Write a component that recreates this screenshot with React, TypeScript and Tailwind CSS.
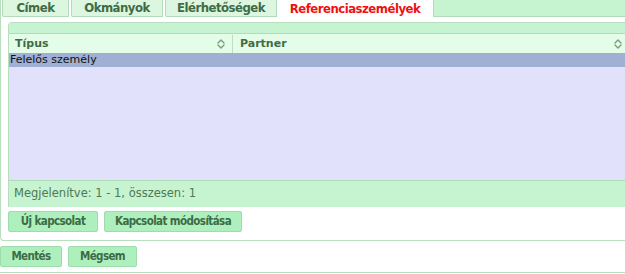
import React from "react";

const tabs = ["Címek", "Okmányok", "Elérhetőségek"];

function SortIcon() {
  return (
    <svg viewBox="0 0 10 12" className="h-[12px] w-[10px]" fill="none" stroke="#7a9a7e" strokeWidth={1.4}>
      <path d="M2 5l3-3 3 3M2 7l3 3 3-3" strokeLinecap="round" strokeLinejoin="round" />
    </svg>
  );
}

function Btn({ label, w }: { label: string; w: string }) {
  return (
    <button
      className={`${w} h-[21px] rounded-[2px] border border-[#9fdcac] bg-[#aef0bd] text-[11.5px] font-bold tracking-[-0.6px] text-[#3d6b45] [font-family:'DejaVu_Sans_Condensed','DejaVu_Sans',sans-serif]`}
    >
      {label}
    </button>
  );
}

export default function App() {
  return (
    <div className="h-[274px] w-[625px] overflow-hidden bg-white [font-family:'DejaVu_Sans',Verdana,sans-serif]">
      <div className="h-[241px] rounded-bl-[4px] border-b border-l border-[#b7dfbf]">
        <div className="flex h-[17px] pl-[1px]">
          {tabs.map((t, i) => (
            <div
              key={t}
              className={`flex h-[17px] items-center justify-center rounded-bl-[2px] border-b border-l border-r border-[#b2dcb9] bg-[#dcf6df] text-[13px] font-bold tracking-[-0.5px] text-[#3f6b46] [font-family:'DejaVu_Sans_Condensed','DejaVu_Sans',sans-serif] ${
                i === 0 ? "w-[67px]" : i === 1 ? "ml-[2px] w-[92px]" : "ml-[2px] w-[112px]"
              }`}
            >
              {t}
            </div>
          ))}
          <div className="flex h-[17px] w-[156px] items-center justify-center text-[13px] font-bold tracking-[-0.5px] text-[#ee1111] [font-family:'DejaVu_Sans_Condensed','DejaVu_Sans',sans-serif]">
            Referenciaszemélyek
          </div>
          <div className="h-[17px] flex-1 border-b border-l border-[#b2dcb9] bg-[#c6f3d0]" />
        </div>

        <div className="ml-[7px] mt-[5px] rounded-tl-[4px] border-l border-t border-[#b7dfbf]">
          <div className="h-[11px] border-b border-[#b0dcb8] bg-[#c6f3d0]" />
          <div className="flex h-[19px] items-center bg-[#e4fde8] pt-[1px] text-[11px] font-bold text-[#3f6b46]">
            <div className="flex h-full w-[224px] items-center justify-between border-r border-[#c0dcc4] pl-[6px] pr-[6px]">
              <span>Típus</span>
              <SortIcon />
            </div>
            <div className="flex h-full flex-1 items-center justify-between pl-[7px] pr-[2px]">
              <span>Partner</span>
              <SortIcon />
            </div>
          </div>
          <div className="flex h-[14px] items-center bg-[#9fb0d4] pl-[1px] text-[11px] text-[#111]">
            Felelős személy
          </div>
          <div className="h-[113px] bg-[#e1e1fb]" />
          <div className="flex h-[27px] items-center border-t border-[#aedcb6] bg-[#c6f3d0] pl-[5px] text-[11.5px] text-[#4e7a54]">
            Megjelenítve: 1 - 1, összesen: 1
          </div>
        </div>

        <div className="ml-[7px] mt-[4px] flex gap-[6px]">
          <Btn label="Új kapcsolat" w="w-[90px]" />
          <Btn label="Kapcsolat módosítása" w="w-[138px]" />
        </div>
      </div>

      <div className="mt-[5px] flex h-[27px] gap-[6px] border-b border-[#b7dfbf]">
        <Btn label="Mentés" w="w-[62px]" />
        <Btn label="Mégsem" w="w-[69px]" />
      </div>
    </div>
  );
}
